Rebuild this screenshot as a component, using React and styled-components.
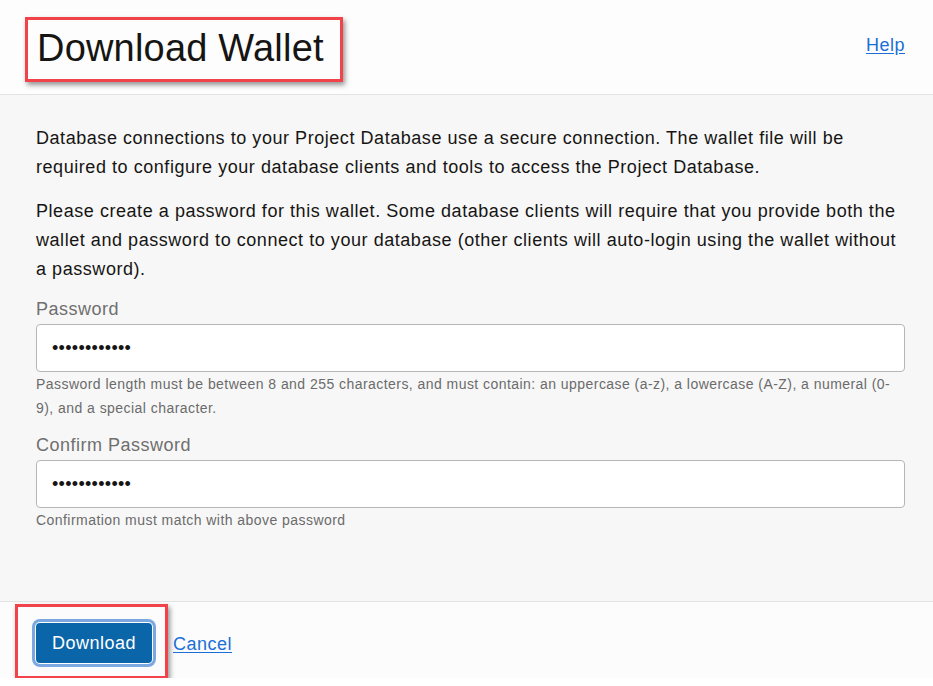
import React from "react";
import styled, { createGlobalStyle } from "styled-components";

const Global = createGlobalStyle`
  html, body { margin: 0; padding: 0; background: #ffffff; }
  body { font-family: "Liberation Sans", Arial, sans-serif; color: #161513; }
  * { box-sizing: border-box; }
`;

const Page = styled.div`
  display: flex;
  flex-direction: column;
  width: 933px;
`;

const Header = styled.header`
  display: flex;
  justify-content: space-between;
  align-items: flex-start;
  height: 95px;
  padding: 17px 28px 0 25px;
  background: #fdfdfd;
  border-bottom: 1px solid #e3e3e3;
`;

const Highlight = styled.div`
  display: flex;
  align-items: center;
  border: 3px solid #f2424a;
  box-shadow: 2px 3px 5px rgba(0, 0, 0, 0.42);
  padding: ${(p) => p.$pad};
`;

const Title = styled.h1`
  margin: 0;
  font-size: 38px;
  line-height: 44px;
  font-weight: 400;
  letter-spacing: 0.2px;
  color: #161513;
`;

const Link = styled.a`
  font-size: 18px;
  line-height: 21px;
  letter-spacing: 0.5px;
  color: #1b6fd6;
  text-decoration: underline;
  text-underline-offset: 2px;
  cursor: pointer;
  margin-top: ${(p) => p.$top || "0"};
  margin-left: ${(p) => p.$left || "0"};
`;

const Body = styled.main`
  display: flex;
  flex-direction: column;
  height: 507px;
  padding: 29px 28px 0 36px;
  background: #f7f7f7;
  border-bottom: 1px solid #e3e3e3;
`;

const Paragraph = styled.p`
  margin: 0 0 15px 0;
  font-size: 18px;
  line-height: 29px;
  letter-spacing: 0.55px;
  color: #161513;
`;

const Field = styled.div`
  display: flex;
  flex-direction: column;
  margin-top: ${(p) => p.$top};
`;

const Label = styled.label`
  font-size: 18px;
  line-height: 24px;
  letter-spacing: 0.5px;
  color: #6f6f6f;
  margin-bottom: 3px;
`;

const Input = styled.input`
  height: 48px;
  width: 100%;
  padding: 0 15px;
  border: 1px solid #b4b6ba;
  border-radius: 4px;
  background: #ffffff;
  font-family: "Liberation Sans", Arial, sans-serif;
  font-size: 18px;
  letter-spacing: 0.3px;
  color: #161513;
  outline: none;
`;

const Hint = styled.div`
  font-size: 14px;
  line-height: 24px;
  letter-spacing: 0.45px;
  color: #6b6b6b;
`;

const Footer = styled.footer`
  display: flex;
  height: 76px;
  padding: 2px 0 0 15px;
  align-items: flex-start;
  background: #fcfcfc;
`;

const Button = styled.button`
  width: 116px;
  height: 40px;
  border: none;
  border-radius: 4px;
  background: #0b66a9;
  color: #ffffff;
  font-family: "Liberation Sans", Arial, sans-serif;
  font-size: 18px;
  letter-spacing: 0.5px;
  cursor: pointer;
  box-shadow: 0 0 0 1px #ffffff, 0 0 0 4px #7ba8e0;
`;

export default function App() {
  return (
    <>
      <Global />
      <Page>
        <Header>
          <Highlight $pad="6px 16px 9px 9px">
            <Title>Download Wallet</Title>
          </Highlight>
          <Link $top="18px">Help</Link>
        </Header>
        <Body>
          <Paragraph>
            Database connections to your Project Database use a secure connection. The wallet file will be
            required to configure your database clients and tools to access the Project Database.
          </Paragraph>
          <Paragraph>
            Please create a password for this wallet. Some database clients will require that you provide both the
            wallet and password to connect to your database (other clients will auto-login using the wallet without
            a password).
          </Paragraph>
          <Field $top="-2px">
            <Label>Password</Label>
            <Input type="password" defaultValue="aaaaaaaaaaaa" />
            <Hint>
              Password length must be between 8 and 255 characters, and must contain: an uppercase (a-z), a lowercase (A-Z), a numeral (0-9), and a special character.
            </Hint>
          </Field>
          <Field $top="13px">
            <Label>Confirm Password</Label>
            <Input type="password" defaultValue="aaaaaaaaaaaa" />
            <Hint>Confirmation must match with above password</Hint>
          </Field>
        </Body>
        <Footer>
          <Highlight $pad="16px 13px 13px 18px">
            <Button>Download</Button>
          </Highlight>
          <Link $top="30px" $left="5px">Cancel</Link>
        </Footer>
      </Page>
    </>
  );
}
